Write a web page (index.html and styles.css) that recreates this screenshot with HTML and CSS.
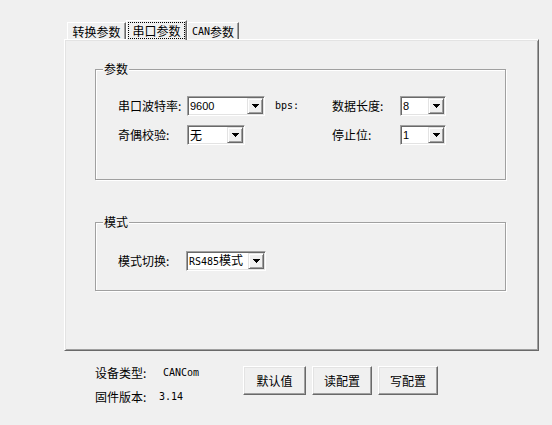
FILE: index.html
```html
<!DOCTYPE html>
<html lang="zh-CN">
<head>
<meta charset="utf-8">
<title>串口参数</title>
<link rel="stylesheet" href="styles.css">
</head>
<body>
<div class="app">
  <div class="tabs">
    <div class="tab t1">转换参数</div>
    <div class="tab active"><span class="focus">串口参数</span></div>
    <div class="tab t3"><span class="m">CAN</span>参数</div>
  </div>
  <div class="panel">
    <div class="group g1">
      <div class="legend">参数</div>
      <div class="grid">
        <div class="lbl">串口波特率:</div>
        <div class="combo w78"><span class="val">9600</span><span class="btn"><svg width="7" height="4" viewBox="0 0 7 4" shape-rendering="crispEdges"><path d="M0 0H7V1H6V2H5V3H4V4H3V3H2V2H1V1H0Z"/></svg></span></div>
        <div class="unit m">bps:</div>
        <div class="lbl">数据长度:</div>
        <div class="combo w46"><span class="val">8</span><span class="btn"><svg width="7" height="4" viewBox="0 0 7 4" shape-rendering="crispEdges"><path d="M0 0H7V1H6V2H5V3H4V4H3V3H2V2H1V1H0Z"/></svg></span></div>
        <div class="lbl">奇偶校验:</div>
        <div class="combo w58"><span class="val cjk">无</span><span class="btn"><svg width="7" height="4" viewBox="0 0 7 4" shape-rendering="crispEdges"><path d="M0 0H7V1H6V2H5V3H4V4H3V3H2V2H1V1H0Z"/></svg></span></div>
        <div></div>
        <div class="lbl">停止位:</div>
        <div class="combo w46"><span class="val">1</span><span class="btn"><svg width="7" height="4" viewBox="0 0 7 4" shape-rendering="crispEdges"><path d="M0 0H7V1H6V2H5V3H4V4H3V3H2V2H1V1H0Z"/></svg></span></div>
      </div>
    </div>
    <div class="group g2">
      <div class="legend">模式</div>
      <div class="row">
        <div class="lbl">模式切换:</div>
        <div class="combo w80"><span class="val cjk"><span class="m">RS485</span>模式</span><span class="btn"><svg width="7" height="4" viewBox="0 0 7 4" shape-rendering="crispEdges"><path d="M0 0H7V1H6V2H5V3H4V4H3V3H2V2H1V1H0Z"/></svg></span></div>
      </div>
    </div>
  </div>
  <div class="footer">
    <div class="info">
      <div class="irow"><span class="ilbl a">设备类型:</span><span class="m">CANCom</span></div>
      <div class="irow"><span class="ilbl b">固件版本:</span><span class="m">3.14</span></div>
    </div>
    <div class="buttons">
      <div class="button b63">默认值</div>
      <div class="button b60">读配置</div>
      <div class="button b60">写配置</div>
    </div>
  </div>
</div>
</body>
</html>
```

FILE: styles.css
```css
html, body {
  margin: 0;
  background: #f0f0f0;
}
body {
  font-family: "Noto Sans CJK SC", "Liberation Sans", sans-serif;
  font-size: 12px;
  color: #000;
}
.app {
  padding: 20px 0 0 64px;
}
.m {
  font-family: "DejaVu Sans Mono", "Liberation Mono", monospace;
  font-size: 10px;
}
.tabs {
  display: flex;
  align-items: flex-end;
  height: 19px;
  padding-left: 3px;
  position: relative;
  z-index: 1;
}
.tab {
  box-sizing: border-box;
  height: 17px;
  border-top: 1px solid #fff;
  border-left: 1px solid #fff;
  border-right: 1px solid #696969;
  box-shadow: inset -1px 0 #a0a0a0;
  display: flex;
  align-items: center;
  justify-content: center;
  line-height: 15px;
  background: #f0f0f0;
}
.t1 { width: 59px; }
.t3 { width: 52px; }
.active {
  width: 61px;
  height: 20px;
  margin-bottom: -1px;
  align-items: flex-start;
  padding-top: 1px;
}
.focus {
  box-sizing: border-box;
  display: block;
  width: 57px;
  height: 17px;
  line-height: 15px;
  text-align: center;
  border: 1px dotted #000;
}
.panel {
  box-sizing: border-box;
  width: 475px;
  height: 312px;
  border: 1px solid;
  border-color: #fff #696969 #696969 #fff;
  box-shadow: inset 1px 1px #e3e3e3, inset -1px -1px #a0a0a0;
  padding: 29px 0 0 30px;
}
.group {
  box-sizing: border-box;
  width: 411px;
  border: 1px solid #a0a0a0;
  box-shadow: inset 1px 1px #fff, 1px 1px #fff;
  padding-left: 22px;
}
.g1 { height: 111px; }
.g2 { height: 69px; margin-top: 42px; }
.legend {
  width: fit-content;
  height: 14px;
  line-height: 14px;
  margin: -8px 0 0 -15px;
  padding: 0 1px;
  background: #f0f0f0;
}
.grid {
  display: grid;
  grid-template-columns: 69px 88px 57px 68px 46px;
  grid-auto-rows: 20px;
  row-gap: 9px;
  align-items: center;
  margin-top: 20px;
}
.row {
  display: grid;
  grid-template-columns: 68px 80px;
  grid-auto-rows: 20px;
  align-items: center;
  margin-top: 22px;
}
.lbl {
  line-height: 14px;
  white-space: nowrap;
}
.unit {
  line-height: 14px;
}
.combo {
  box-sizing: border-box;
  height: 20px;
  border: 1px solid;
  border-color: #a0a0a0 #fff #fff #a0a0a0;
  box-shadow: inset 1px 1px #696969, inset -1px -1px #e3e3e3;
  background: #fff;
  display: flex;
  align-items: center;
  padding: 1px;
}
.w78 { width: 78px; }
.w58 { width: 58px; }
.w46 { width: 46px; }
.w80 { width: 80px; }
.val {
  flex: 1;
  min-width: 0;
  padding-left: 1px;
  font-family: "Liberation Sans", Arial, sans-serif;
  font-size: 11px;
  line-height: 16px;
  white-space: nowrap;
}
.val.cjk {
  font-family: "Noto Sans CJK SC", sans-serif;
  font-size: 12px;
}
.btn {
  box-sizing: border-box;
  width: 16px;
  height: 16px;
  flex: none;
  background: #f0f0f0;
  border: 1px solid;
  border-color: #e3e3e3 #696969 #696969 #e3e3e3;
  box-shadow: inset 1px 1px #fff, inset -1px -1px #a0a0a0;
  display: flex;
  align-items: center;
  justify-content: center;
}
.btn svg {
  display: block;
  fill: #000;
}
.footer {
  display: flex;
  margin-top: 15px;
  padding-left: 31px;
}
.info {
  width: 148px;
}
.irow {
  display: flex;
  align-items: center;
  height: 14px;
  line-height: 14px;
  margin-bottom: 10px;
  white-space: nowrap;
}
.ilbl.a { width: 68px; }
.ilbl.b { width: 64px; }
.buttons {
  display: flex;
  gap: 6px;
}
.button {
  box-sizing: border-box;
  height: 29px;
  border: 1px solid;
  border-color: #fff #696969 #696969 #fff;
  box-shadow: inset -1px -1px #a0a0a0, inset 1px 1px #e3e3e3;
  display: flex;
  align-items: center;
  justify-content: center;
  line-height: 14px;
}
.b63 { width: 63px; }
.b60 { width: 60px; }
```
